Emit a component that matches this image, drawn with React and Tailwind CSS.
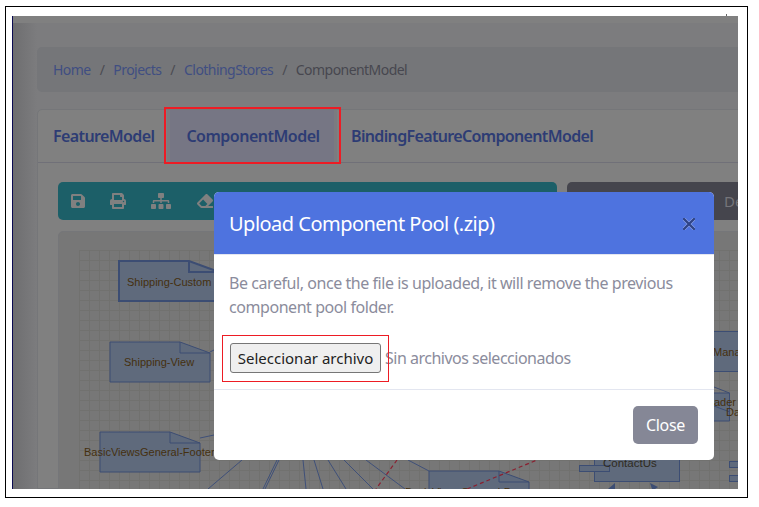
import React from "react";
import { FaSave, FaPrint, FaSitemap, FaEraser } from "react-icons/fa";

const sans = "font-['Noto_Sans','Open_Sans',sans-serif]";
const ARIAL = "Liberation Sans, sans-serif";

function Note({ x, y, w = 100, h = 40, fold = 30, foldH = 11, thick = false, label, textX, textY }) {
  const sw = thick ? 2 : 1;
  return (
    <g>
      <path
        d={`M${x} ${y}H${x + w - fold}L${x + w} ${y + foldH}V${y + h}H${x}Z`}
        fill="#5f6a7c"
        stroke="#3c4d73"
        strokeWidth={sw}
      />
      <path d={`M${x + w - fold} ${y}V${y + foldH}H${x + w}`} fill="none" stroke="#3c4d73" strokeWidth={sw} />
      {label && (
        <text x={textX} y={textY} fontFamily={ARIAL} fontSize="11" fill="#45300f">
          {label}
        </text>
      )}
    </g>
  );
}

function Diagram() {
  const lines = [
    [242, 460, 208, 489], [277, 460, 263, 489], [279, 460, 265, 489], [303, 460, 306, 489],
    [314, 460, 323, 489], [328, 460, 346, 489], [344, 460, 373, 489], [366, 460, 405, 489],
    [408, 460, 429, 471], [200, 438, 214, 435], [210, 352, 214, 350],
  ];
  return (
    <svg className="absolute inset-0 h-full w-full" viewBox="0 0 680 239" fill="none">
      <g transform="translate(-79 -250)">
        {lines.map(([a, b, c, d], i) => (
          <line key={i} x1={a} y1={b} x2={c} y2={d} stroke="#3f5079" strokeWidth="1" />
        ))}
        <path d="M397 460L376 489" stroke="#8a2030" strokeWidth="1.2" strokeDasharray="4 3" />
        <Note x={119} y={261} w={100} h={40} thick label="Shipping-Custom" textX={127} textY={286} />
        <Note x={110} y={342} label="Shipping-View" textX={124} textY={366} />
        <Note x={100} y={432} label="BasicViewsGeneral-Footer" textX={84} textY={456} />
        <Note x={429} y={471} h={30} label="BasicViewsGeneral-Pages" textX={405} textY={496} />
        <path d="M467 489L537 460" stroke="#8a2030" strokeWidth="1.2" strokeDasharray="4 3" />
        <rect x="594.5" y="452.5" width="85" height="29" fill="#5f6a7c" stroke="#3c4d73" />
        <rect x="579.5" y="465.5" width="30" height="6" fill="#5f6a7c" stroke="#3c4d73" />
        <text x="603" y="467" fontFamily={ARIAL} fontSize="11.5" fill="#2f2a20">ContactUs</text>
        <path d="M608 489L615 483L615 489Z" fill="#3c4d73" />
        <path d="M650 483L658 487L655 489H652Z" fill="#3c4d73" />
        <rect x="690.5" y="331.5" width="60" height="40" fill="#5f6a7c" stroke="#3c4d73" />
        <text x="713" y="356" fontFamily={ARIAL} fontSize="11" fill="#45300f">Manager</text>
        <path d="M714 387L729.5 393V421H700V393H729.5" fill="#5f6a7c" stroke="#3c4d73" />
        <line x1="714" y1="406" x2="730" y2="412" stroke="#3c4d73" />
        <text x="714" y="406" fontFamily={ARIAL} fontSize="11" fill="#45300f">ader</text>
        <text x="726" y="416" fontFamily={ARIAL} fontSize="11" fill="#45300f">Da</text>
        <rect x="729.5" y="461.5" width="20" height="6" fill="#5f6a7c" stroke="#3c4d73" />
        <rect x="729.5" y="475.5" width="20" height="6" fill="#5f6a7c" stroke="#3c4d73" />
      </g>
    </svg>
  );
}

export default function App() {
  return (
    <div className={`h-[507px] w-[759px] overflow-hidden bg-white pl-[5px] pt-[6px] ${sans}`}>
      <div className="relative h-[492px] w-[743px] border border-black pl-[6px] pt-[9px]">
        <span className="absolute left-[720px] top-[7px] h-[2px] w-[1px] bg-[#666]" />
        {/* dimmed page */}
        <div className="relative h-[473px] w-[726px] overflow-hidden border-l border-l-[#0b0b52] bg-[#7c7c7e]">
          <div className="h-[7px] bg-[#808080]" />
          <div className="bg-[linear-gradient(90deg,#6e6e70_0px,#7c7c7e_24px)] pl-[24px] pt-[24px]">
            <div className="flex h-[45px] w-[760px] items-center gap-[9px] rounded-l-[5px] bg-[#757679] pl-[16px] text-[14px] tracking-[-0.55px]">
              <span className="text-[#404e82]">Home</span>
              <span className="text-[#4b4b52]">/</span>
              <span className="text-[#404e82]">Projects</span>
              <span className="text-[#4b4b52]">/</span>
              <span className="text-[#404e82]">ClothingStores</span>
              <span className="text-[#4b4b52]">/</span>
              <span className="text-[#47474f]">ComponentModel</span>
            </div>
            <div className="mt-[17px] h-[380px] w-[760px] rounded-tl-[5px] border border-[#757679] bg-[#808080]">
              <div className="flex h-[53px] border-b border-b-[#707078]">
                <div className="flex w-[129px] items-center pl-[15px] text-[16px] font-semibold tracking-[-0.6px] text-[#2d3c74]">
                  FeatureModel
                </div>
                <div className="flex w-[170px] items-center justify-center border-x-[3px] border-x-[#7b7b80] bg-[#767684] pl-[2px] text-[16px] font-semibold tracking-[-0.5px] text-[#2d3c74]">
                  ComponentModel
                </div>
                <div className="flex items-center pl-[14px] text-[16px] font-semibold tracking-[-0.65px] text-[#2d3c74]">
                  BindingFeatureComponentModel
                </div>
              </div>
              <div className="pl-[20px] pt-[19px]">
                <div className="flex gap-[10px]">
                  <div className="flex h-[38px] w-[499px] items-center gap-[25px] rounded-[5px] bg-[#1c5f68] pl-[13px] text-[15px] text-[#808080]">
                    <FaSave className="h-[16px] w-[14px]" />
                    <FaPrint className="h-[16px] w-[16px]" />
                    <FaSitemap className="h-[16px] w-[20px]" />
                    <FaEraser className="h-[16px] w-[18px]" />
                  </div>
                  <div className="flex h-[38px] flex-1 items-center rounded-l-[5px] bg-[#45454d] pl-[157px] text-[15px] text-[#75757a]">
                    Delete
                  </div>
                </div>
                <div className="mt-[11px] rounded-tl-[5px] border border-[#757679] bg-[#777777] pl-[20px] pt-[18px]">
                  <div className="relative h-[239px] w-[680px] bg-[linear-gradient(#71716f_1px,transparent_1px),linear-gradient(90deg,#71716f_1px,transparent_1px)] bg-[size:10px_10px]">
                    <Diagram />
                  </div>
                </div>
              </div>
            </div>
          </div>

          {/* red annotation on the active tab */}
          <div className="absolute left-[151px] top-[91px] h-[57px] w-[177px] border-2 border-[#ed1c24]" />

          {/* modal */}
          <div className="absolute left-[201px] top-[176px] flex h-[268px] w-[500px] flex-col overflow-hidden rounded-[5px] bg-white">
            <div className="flex h-[63px] items-center justify-between border-b border-b-[#e3e6f0] bg-[#4e73df] pl-[15px] pr-[19px]">
              <span className="pt-[2px] text-[20px] tracking-[-0.52px] text-white">Upload Component Pool (.zip)</span>
              <svg width="12" height="12" viewBox="0 0 12 12" className="mt-[1px]" aria-label="Close">
                <path d="M1 1L11 11M11 1L1 11" stroke="#8fa6ea" strokeWidth="3.4" strokeLinecap="round" />
                <path d="M1 1L11 11M11 1L1 11" stroke="#2f4486" strokeWidth="2.4" strokeLinecap="round" />
              </svg>
            </div>
            <div className="relative flex-1 border-b border-b-[#e3e6f0] px-[15px] pt-[16px] text-[16px] leading-[24px] tracking-[-0.44px] text-[#8b8c9c]">
              <p>Be careful, once the file is uploaded, it will remove the previous component pool folder.</p>
              <div className="mt-[24px] flex items-center pl-[1px]">
                <button className="h-[30px] w-[151px] rounded-[3px] border border-[#767676] bg-[#efefef] text-[15px] tracking-normal text-[#222]">
                  Seleccionar archivo
                </button>
                <span className="ml-[4px] tracking-[-0.5px]">Sin archivos seleccionados</span>
              </div>
              <div className="absolute left-[8px] top-[80px] h-[47px] w-[167px] border border-[#ed1c24]" />
            </div>
            <div className="flex h-[70px] items-center justify-end pr-[16px]">
              <button className="h-[38px] w-[65px] rounded-[5px] bg-[#858796] text-[16px] tracking-[-0.3px] text-white">
                Close
              </button>
            </div>
          </div>
        </div>
      </div>
    </div>
  );
}
